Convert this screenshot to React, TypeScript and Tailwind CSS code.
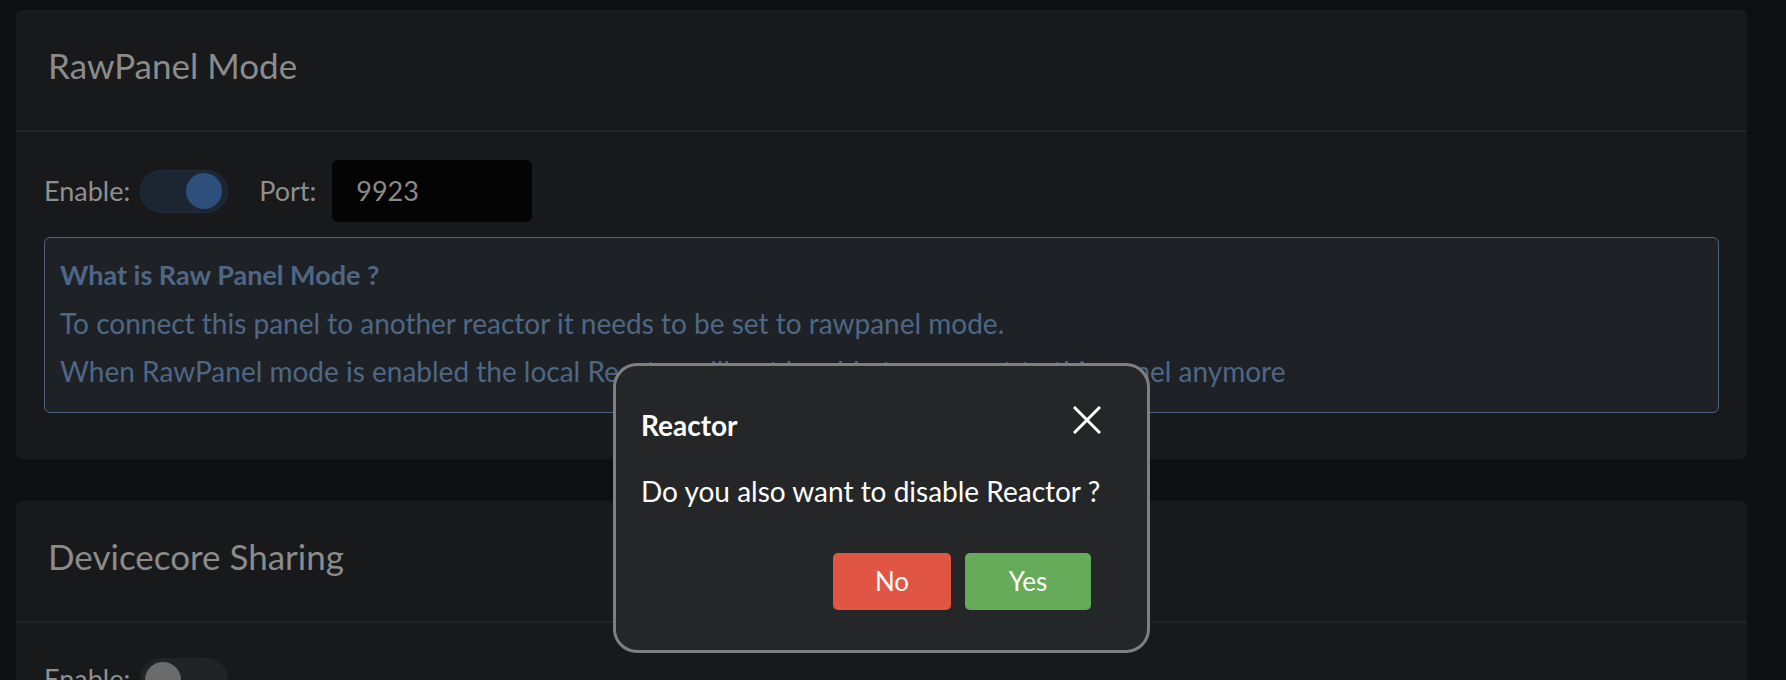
import { ReactNode } from 'react';

interface ToggleProps {
  on: boolean;
}

function Toggle({ on }: ToggleProps) {
  return (
    <div
      className={
        on
          ? 'flex h-[43px] w-[88px] items-center justify-end rounded-full border border-[#222e3d] bg-[#1c2633] pr-[5px]'
          : 'flex h-[43px] w-[88px] items-center justify-start rounded-full bg-[#222325] pl-[5px]'
      }
    >
      <div className={on ? 'h-[36px] w-[36px] rounded-full bg-[#2c4f7c]' : 'h-[36px] w-[36px] rounded-full bg-[#6b6b6b]'} />
    </div>
  );
}

interface CardProps {
  title: string;
  children: ReactNode;
  bodyTop?: string;
}

function Card({ title, children, bodyTop = 'pt-[28px]' }: CardProps) {
  return (
    <div className="rounded-md bg-[#18191b]">
      <div className="flex h-[122px] items-center border-b-2 border-[#232426] px-8 pb-[10px]">
        <h2 className="text-[35px] text-[#8b8b8b]">{title}</h2>
      </div>
      <div className={`px-7 pb-[46px] ${bodyTop}`}>{children}</div>
    </div>
  );
}

export default function App() {
  return (
    <div className="relative h-[680px] overflow-hidden bg-[#0e0f11] pl-4 pr-[39px] pt-[10px] font-['Lato',sans-serif]">
      <Card title="RawPanel Mode">
        <div className="flex h-[62px] items-center">
          <span className="mr-[10px] text-[27px] text-[#8f8f8f]">Enable:</span>
          <Toggle on />
          <span className="ml-[31px] mr-4 text-[27px] text-[#8f8f8f]">Port:</span>
          <div className="flex h-[62px] w-[200px] items-center rounded-md bg-[#040404] pl-6 text-[27px] text-[#8a8a8a]">
            9923
          </div>
        </div>
        <div className="mt-[15px] rounded-md border border-[#4a627e] bg-[#1e2226] px-[15px] pb-[17px] pt-[13px] text-[28px] leading-[48px] text-[#4e6785]">
          <div className="text-[27px] font-bold">What is Raw Panel Mode ?</div>
          <div>To connect this panel to another reactor it needs to be set to rawpanel mode.</div>
          <div>When RawPanel mode is enabled the local Reactor will not be able to connect to this panel anymore</div>
        </div>
      </Card>

      <div className="mt-[42px]">
        <Card title="Devicecore Sharing" bodyTop="pt-[35px]">
          <div className="flex h-[43px] items-center">
            <span className="mr-[10px] text-[27px] text-[#8f8f8f]">Enable:</span>
            <Toggle on={false} />
          </div>
        </Card>
      </div>

      {/* confirm dialog */}
      <div className="absolute left-[613px] top-[363px] h-[290px] w-[537px] rounded-[24px] border-[3px] border-[#7f7f7f] bg-[#252628] px-[25px] pt-[39px] text-white">
        <div className="flex h-[40px] items-center justify-between">
          <span className="text-[28px] font-bold">Reactor</span>
          <svg className="mr-[21px] -mt-[11px]" width="28" height="28" viewBox="0 0 28 28" fill="none" stroke="white" strokeWidth="3">
            <path d="M1 1 L27 27 M27 1 L1 27" />
          </svg>
        </div>
        <div className="mt-[26px] text-[28px] leading-[40px]">Do you also want to disable Reactor ?</div>
        <div className="mt-[42px] flex justify-end gap-[14px] pr-[31px]">
          <button className="h-[57px] w-[118px] rounded-[5px] bg-[#e05543] text-[26px] text-white">No</button>
          <button className="h-[57px] w-[126px] rounded-[5px] bg-[#66ab5a] text-[26px] text-white">Yes</button>
        </div>
      </div>
    </div>
  );
}
